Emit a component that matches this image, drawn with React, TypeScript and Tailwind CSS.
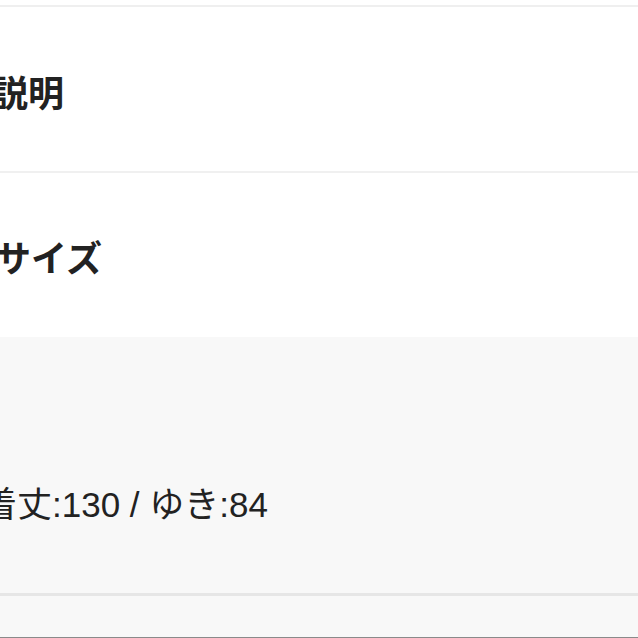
export default function App() {
  const font = { fontFamily: '"Noto Sans CJK JP", "Noto Sans", sans-serif' };
  const latin = { fontFamily: '"Liberation Sans", "Noto Sans CJK JP", sans-serif' };
  return (
    <div className="w-[638px] h-[638px] overflow-hidden bg-white text-[#222222]" style={font}>
      <div className="h-[5px] bg-white" />
      <div className="h-[2px] bg-[#efefef]" />
      <div className="h-[164px] flex items-center">
        <span className="ml-[-8px] mt-[4px] text-[36px] font-bold leading-none whitespace-nowrap">説明</span>
      </div>
      <div className="h-[2px] bg-[#f0f0f0]" />
      <div className="h-[164px] flex items-center">
        <span className="ml-[-5px] mt-[1px] text-[36px] font-bold leading-none whitespace-nowrap">サイズ</span>
      </div>
      <div className="h-[256px] bg-[#f8f8f8] flex flex-col">
        <div className="mt-[150px] ml-[-18px] text-[35px] leading-none whitespace-nowrap" style={latin}>着丈:130 / ゆき:84</div>
      </div>
      <div className="h-[3px] bg-[#e6e6e6]" />
      <div className="h-[41px] bg-[#f8f8f8]" />
      <div className="h-[1px] bg-[#8a8a8a]" />
    </div>
  );
}
